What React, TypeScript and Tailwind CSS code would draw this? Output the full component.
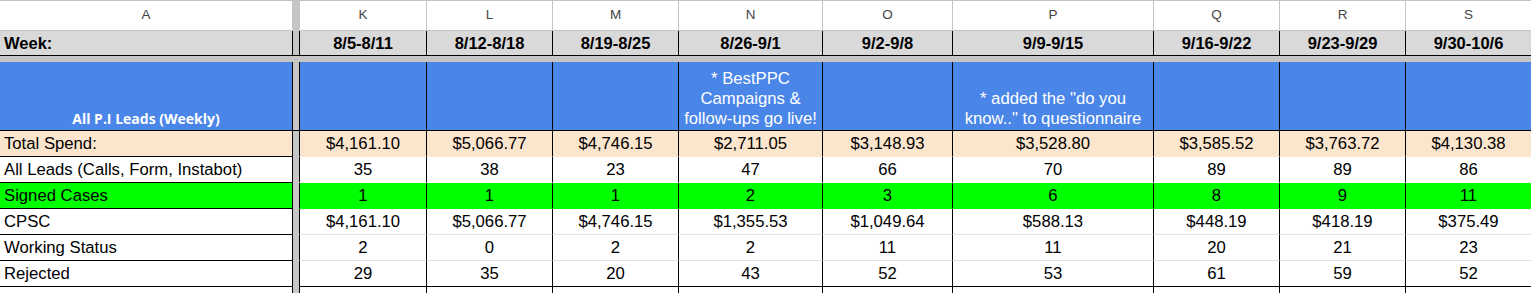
import React from "react";

type Col = {
  letter: string;
  w: string;
  week: string;
  note?: string[];
  total: string;
  leads: string;
  signed: string;
  cpsc: string;
  working: string;
  rejected: string;
};

const cols: Col[] = [
  { letter: "K", w: "w-[128px] border-l", week: "8/5-8/11", total: "$4,161.10", leads: "35", signed: "1", cpsc: "$4,161.10", working: "2", rejected: "29" },
  { letter: "L", w: "w-[126px]", week: "8/12-8/18", total: "$5,066.77", leads: "38", signed: "1", cpsc: "$5,066.77", working: "0", rejected: "35" },
  { letter: "M", w: "w-[126px]", week: "8/19-8/25", total: "$4,746.15", leads: "23", signed: "1", cpsc: "$4,746.15", working: "2", rejected: "20" },
  { letter: "N", w: "w-[144px]", week: "8/26-9/1", note: ["* BestPPC", "Campaigns &", "follow-ups go live!"], total: "$2,711.05", leads: "47", signed: "2", cpsc: "$1,355.53", working: "2", rejected: "43" },
  { letter: "O", w: "w-[130px]", week: "9/2-9/8", total: "$3,148.93", leads: "66", signed: "3", cpsc: "$1,049.64", working: "11", rejected: "52" },
  { letter: "P", w: "w-[201px]", week: "9/9-9/15", note: ['* added the "do you', 'know.." to questionnaire'], total: "$3,528.80", leads: "70", signed: "6", cpsc: "$588.13", working: "11", rejected: "53" },
  { letter: "Q", w: "w-[126px]", week: "9/16-9/22", total: "$3,585.52", leads: "89", signed: "8", cpsc: "$448.19", working: "20", rejected: "61" },
  { letter: "R", w: "w-[126px]", week: "9/23-9/29", total: "$3,763.72", leads: "89", signed: "9", cpsc: "$418.19", working: "21", rejected: "59" },
  { letter: "S", w: "w-[126px]", week: "9/30-10/6", total: "$4,130.38", leads: "86", signed: "11", cpsc: "$375.49", working: "23", rejected: "52" },
];

const font = "font-['Liberation_Sans',Arial,sans-serif]";

function Bar() {
  return <div className="w-[6px] shrink-0 self-stretch bg-[#c6c6c6]" />;
}

type RowDef = {
  label: string;
  key: "total" | "leads" | "signed" | "cpsc" | "working" | "rejected";
  bg: string;
  aBorder: string;
  dBorder: string;
};

const rows: RowDef[] = [
  { label: "Total Spend:", key: "total", bg: "bg-[#fce5cd]", aBorder: "border-b border-b-black h-[26px]", dBorder: "border-b border-b-[#fce5cd] h-[26px]" },
  { label: "All Leads (Calls, Form, Instabot)", key: "leads", bg: "bg-white", aBorder: "border-b border-b-black h-[26px]", dBorder: "border-b border-b-white h-[26px]" },
  { label: "Signed Cases", key: "signed", bg: "bg-[#00ff00]", aBorder: "border-b border-b-black h-[26px]", dBorder: "border-b border-b-[#00ff00] h-[26px]" },
  { label: "CPSC", key: "cpsc", bg: "bg-white", aBorder: "border-b border-b-black h-[26px]", dBorder: "border-b border-b-[#e2e2e2] h-[26px]" },
  { label: "Working Status", key: "working", bg: "bg-white", aBorder: "border-b border-b-black h-[26px]", dBorder: "border-b border-b-[#e2e2e2] h-[26px]" },
  { label: "Rejected", key: "rejected", bg: "bg-white", aBorder: "border-b border-b-black h-[26px]", dBorder: "border-b border-b-black h-[26px]" },
];

export default function App() {
  return (
    <div className={`w-[1531px] h-[293px] overflow-hidden bg-white text-black ${font}`}>
      {/* column letters */}
      <div className="flex h-[31px] border-t border-b border-[#c4c4c4] bg-white">
        <div className="w-[292px] shrink-0 flex items-center justify-center text-[13.5px] text-[#444]">A</div>
        <div className="w-[7px] shrink-0 bg-[#c6c6c6]" />
        {cols.map((c) => (
          <div
            key={c.letter}
            className={`${c.w} box-border shrink-0 border-r border-[#c4c4c4] flex items-center justify-center text-[13.5px] text-[#444]`}
          >
            {c.letter}
          </div>
        ))}
      </div>
      {/* week row */}
      <div className="flex h-[25px] border-b border-black bg-[#d9d9d9]">
        <div className="w-[293px] shrink-0 box-border border-r border-black flex items-center pl-1 text-[16.5px] font-bold">Week:</div>
        <Bar />
        {cols.map((c) => (
          <div
            key={c.letter}
            className={`${c.w} box-border shrink-0 border-r border-black flex items-center justify-center text-[16.5px] font-bold`}
          >
            {c.week}
          </div>
        ))}
      </div>
      {/* freeze bar */}
      <div className="h-[6px] bg-[#c6c6c6]" />
      {/* blue row */}
      <div className="flex h-[69px] border-b border-black bg-[#4a86e8]">
        <div className="w-[293px] shrink-0 box-border border-r border-black flex items-end justify-center pb-[1px] text-[14px] font-bold text-white font-['Open_Sans',sans-serif]">
          All P.I Leads (Weekly)
        </div>
        <Bar />
        {cols.map((c) => (
          <div
            key={c.letter}
            className={`${c.w} box-border shrink-0 border-r border-black flex flex-col items-center justify-end pb-[1px] text-[16.7px] leading-[20px] text-white text-center`}
          >
            {c.note?.map((l) => (
              <div key={l} className="whitespace-nowrap">{l}</div>
            ))}
          </div>
        ))}
      </div>
      {/* data rows */}
      {rows.map((r) => (
        <div key={r.key} className={`flex ${r.bg}`}>
          <div className={`w-[293px] shrink-0 box-border border-r border-r-black ${r.aBorder} flex items-center pl-1 text-[16.7px] whitespace-nowrap`}>
            {r.label}
          </div>
          <Bar />
          {cols.map((c) => (
            <div
              key={c.letter}
              className={`${c.w} box-border shrink-0 border-r border-black ${r.dBorder} flex items-center justify-center text-[16.7px]`}
            >
              {c[r.key]}
            </div>
          ))}
        </div>
      ))}
      {/* partial row */}
      <div className="flex h-[26px] bg-white">
        <div className="w-[293px] shrink-0 box-border border-r border-black" />
        <Bar />
        {cols.map((c) => (
          <div key={c.letter} className={`${c.w} box-border shrink-0 border-r border-black`} />
        ))}
      </div>
    </div>
  );
}
